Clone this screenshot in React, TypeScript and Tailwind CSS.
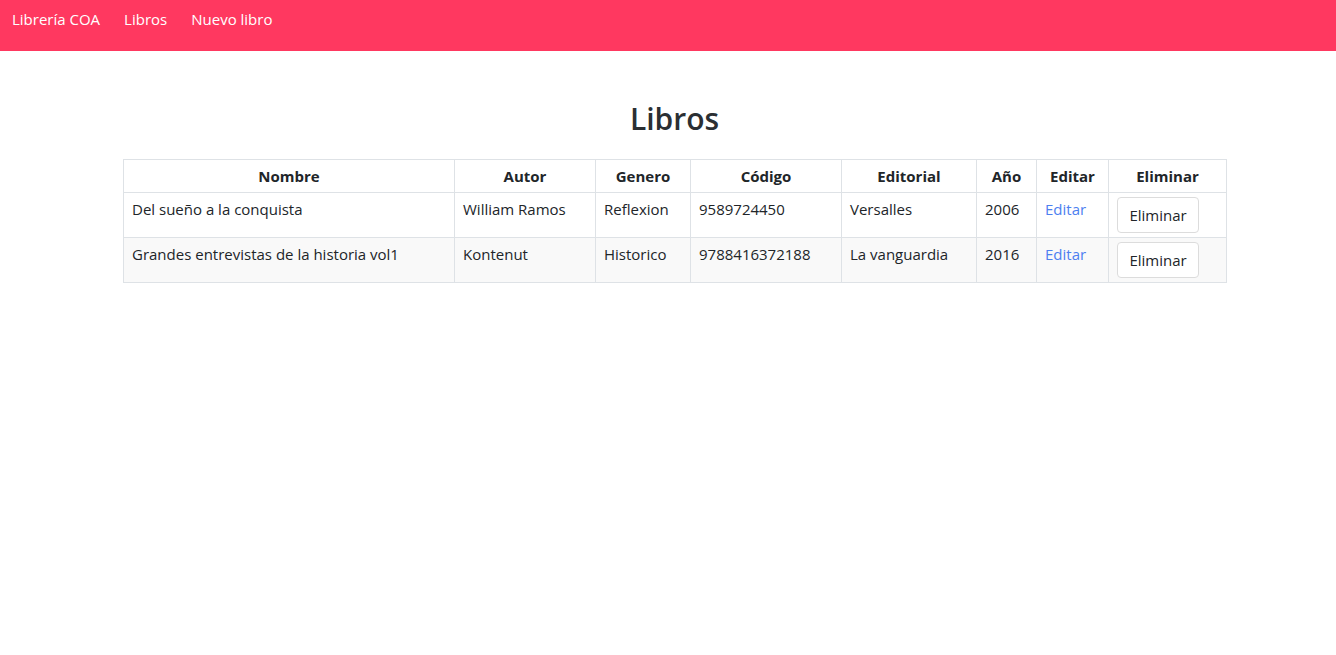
const rows = [
  {
    nombre: "Del sueño a la conquista",
    autor: "William Ramos",
    genero: "Reflexion",
    codigo: "9589724450",
    editorial: "Versalles",
    anio: "2006",
  },
  {
    nombre: "Grandes entrevistas de la historia vol1",
    autor: "Kontenut",
    genero: "Historico",
    codigo: "9788416372188",
    editorial: "La vanguardia",
    anio: "2016",
  },
];

const cols = ["Nombre", "Autor", "Genero", "Código", "Editorial", "Año", "Editar", "Eliminar"];
const widths = ["w-[331px]", "w-[141px]", "w-[95px]", "w-[151px]", "w-[135px]", "w-[60px]", "w-[72px]", "w-[118px]"];

export default function App() {
  return (
    <div className="min-h-screen bg-white font-['Open_Sans',sans-serif] text-[15px] text-[#212529]">
      <nav className="flex h-[51px] items-start gap-6 bg-[#ff3860] px-3 pt-[7px] text-white">
        <a className="leading-6">Librería COA</a>
        <a className="leading-6">Libros</a>
        <a className="leading-6">Nuevo libro</a>
      </nav>

      <main className="px-[123px] pt-[49px]">
        <h1 className="mb-[21px] pl-[13px] text-center text-[30px] font-semibold leading-[38px] text-[#2b2f33]">Libros</h1>
        <table className="w-[1104px] table-fixed border-collapse border border-[#dee2e6]">
          <thead>
            <tr>
              {cols.map((c, i) => (
                <th
                  key={c}
                  className={`${widths[i]} border border-[#dee2e6] px-2 py-[4px] text-center font-bold leading-6`}
                >
                  {c}
                </th>
              ))}
            </tr>
          </thead>
          <tbody>
            {rows.map((r, i) => (
              <tr key={r.codigo} className={i % 2 === 1 ? "bg-[#f9f9f9]" : "bg-white"}>
                <td className="h-[45px] border border-[#dee2e6] px-2 pt-[4px] align-top leading-6">{r.nombre}</td>
                <td className="border border-[#dee2e6] px-2 pt-[4px] align-top leading-6">{r.autor}</td>
                <td className="border border-[#dee2e6] px-2 pt-[4px] align-top leading-6">{r.genero}</td>
                <td className="border border-[#dee2e6] px-2 pt-[4px] align-top leading-6">{r.codigo}</td>
                <td className="border border-[#dee2e6] px-2 pt-[4px] align-top leading-6">{r.editorial}</td>
                <td className="border border-[#dee2e6] px-2 pt-[4px] align-top leading-6">{r.anio}</td>
                <td className="border border-[#dee2e6] px-2 pt-[4px] align-top leading-6">
                  <a className="text-[#4d7ff0]">Editar</a>
                </td>
                <td className="border border-[#dee2e6] px-2 py-[4px] align-top">
                  <button className="h-9 w-[82px] rounded border border-[#dcdcdc] bg-white leading-6">
                    Eliminar
                  </button>
                </td>
              </tr>
            ))}
          </tbody>
        </table>
      </main>
    </div>
  );
}
